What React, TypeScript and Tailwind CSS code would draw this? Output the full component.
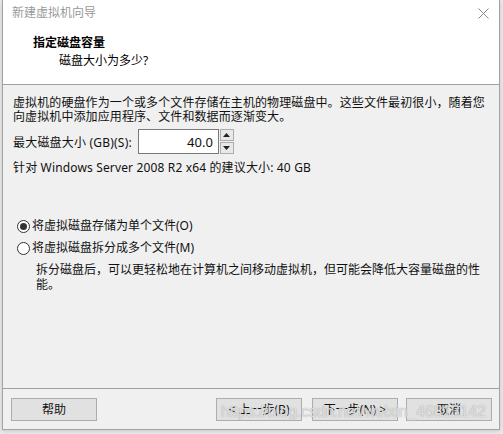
const FONT = "font-['Noto_Sans','Noto_Sans_CJK_SC',sans-serif]";

function Radio({ checked, label }: { checked?: boolean; label: string }) {
  return (
    <div className="flex h-[22px] items-center">
      <span className="ml-[14px] flex h-[13px] w-[13px] items-center justify-center rounded-full border border-[#333] bg-white">
        {checked && <span className="h-[7px] w-[7px] rounded-full bg-[#333]" />}
      </span>
      <span className="ml-[2px]">{label}</span>
    </div>
  );
}

function Btn({ children, className = "" }: { children: React.ReactNode; className?: string }) {
  return (
    <div
      className={`flex h-[23px] w-[86px] items-center justify-center border border-[#adadad] bg-[#e1e1e1] text-[12px] ${className}`}
    >
      {children}
    </div>
  );
}

export default function App() {
  return (
    <div className={`h-[434px] w-[503px] overflow-hidden bg-[#e9e9e9] text-[12px] text-[#111] ${FONT}`}>
      <div className="ml-[2px] flex h-[430px] w-[498px] flex-col border-x border-b border-[#a3a3a3] bg-[#f0f0f0] shadow-[0_1px_4px_rgba(0,0,0,0.15)]">
        {/* title bar + header */}
        <div className="h-[85px] border-b border-[#a0a0a0] bg-white">
          <div className="flex h-[26px] items-center justify-between pl-[9px] pr-[9px]">
            <span className="text-[#999]">新建虚拟机向导</span>
            <svg width="11" height="11" viewBox="0 0 11 11" className="mr-[1px]">
              <path d="M0.5 0.5 L10.5 10.5 M10.5 0.5 L0.5 10.5" stroke="#888" strokeWidth="1" />
            </svg>
          </div>
          <div className="pl-[30px] pt-[9px] leading-[15px]">
            <div className="font-bold text-black">指定磁盘容量</div>
            <div className="mt-[3px] pl-[26px] text-black">磁盘大小为多少?</div>
          </div>
        </div>

        {/* body */}
        <div className="flex-1 pl-[10px] pt-[11px] leading-[14px]">
          <p className="tracking-[0.1px]">
            虚拟机的硬盘作为一个或多个文件存储在主机的物理磁盘中。这些文件最初很小，随着您
            <br />
            向虚拟机中添加应用程序、文件和数据而逐渐变大。
          </p>

          <div className="mt-[5px] flex items-center">
            <span className="mt-[3px] tracking-[0.2px]">最大磁盘大小 (GB)(S):</span>
            <div className="ml-[6px] flex h-[25px] w-[81px] items-center justify-end border border-[#7a7a7a] bg-white pr-[5px] text-[13px]">
              40.0
            </div>
            <div className="ml-[1px] flex h-[25px] w-[14px] flex-col gap-[1px]">
              <div className="flex flex-1 items-center justify-center border border-[#adadad] bg-[#e8e8e8]">
                <svg width="7" height="4" viewBox="0 0 7 4">
                  <path d="M3.5 0 L7 4 L0 4 Z" fill="#222" />
                </svg>
              </div>
              <div className="flex flex-1 items-center justify-center border border-[#adadad] bg-[#e8e8e8]">
                <svg width="7" height="4" viewBox="0 0 7 4">
                  <path d="M0 0 L7 0 L3.5 4 Z" fill="#222" />
                </svg>
              </div>
            </div>
          </div>

          <p className="mt-[7px] tracking-[0.15px]">针对 Windows Server 2008 R2 x64 的建议大小: 40 GB</p>

          <div className="mt-[40px] -ml-[10px]">
            <Radio checked label="将虚拟磁盘存储为单个文件(O)" />
            <Radio label="将虚拟磁盘拆分成多个文件(M)" />
            <p className="mt-[3px] pl-[33px] leading-[15px]">
              拆分磁盘后，可以更轻松地在计算机之间移动虚拟机，但可能会降低大容量磁盘的性
              <br />
              能。
            </p>
          </div>
        </div>

        {/* footer */}
        <div className="relative flex h-[41px] border-t border-[#a0a0a0] pl-[8px] pr-[6px] pt-[9px]">
          <Btn>帮助</Btn>
          <Btn className="ml-[119px]">&lt; 上一步(B)</Btn>
          <Btn className="ml-[10px]">下一步(N) &gt;</Btn>
          <Btn className="ml-[8px]">取消</Btn>
          <span className="pointer-events-none absolute left-[218px] top-[11px] font-['Liberation_Sans',sans-serif] text-[16px] tracking-[-0.2px] text-white/70 [text-shadow:0_0_1px_#888]">
            https://blog.csdn.net/weixin_46813142
          </span>
        </div>
      </div>
    </div>
  );
}
